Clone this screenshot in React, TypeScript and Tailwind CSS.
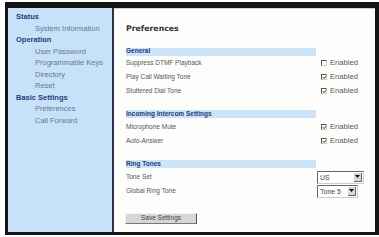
import React from "react";

const Check = ({ checked }: { checked: boolean }) => (
  <div className="relative w-[6px] h-[6px] bg-white border-t border-l border-t-[#555] border-l-[#555] border-r border-b border-r-[#d0d0d0] border-b-[#d0d0d0]">
    {checked && (
      <svg className="absolute left-0 top-0" width="5" height="5" viewBox="0 0 5 5">
        <path d="M0.8 2.2 L2 3.6 L4.3 0.8" fill="none" stroke="#333" strokeWidth="1" />
      </svg>
    )}
  </div>
);

const Enabled = ({ checked }: { checked: boolean }) => (
  <div className="flex items-center gap-[3px] ml-[4px]">
    <Check checked={checked} />
    <span className="text-[7.6px] text-[#555]">Enabled</span>
  </div>
);

const Select = ({ value, width }: { value: string; width: string }) => (
  <div className={`flex items-stretch h-[13px] bg-white border-t border-l border-t-[#666] border-l-[#666] border-r border-b border-r-[#ccc] border-b-[#ccc] ${width}`}>
    <span className="flex-1 text-[7px] leading-[11px] pl-[2px] text-[#444]">{value}</span>
    <div className="w-[8px] m-[1px] bg-[#d8d8d8] border-r border-b border-r-[#666] border-b-[#666] flex items-center justify-center">
      <svg width="5" height="3" viewBox="0 0 5 3">
        <path d="M0 0 L5 0 L2.5 3 Z" fill="#111" />
      </svg>
    </div>
  </div>
);

const Bar = ({ label, mt }: { label: string; mt: string }) => (
  <div className={`w-[190px] h-[8px] bg-[#cde3f8] flex items-center ${mt}`}>
    <span className="text-[6.5px] font-bold text-[#233a7a] leading-none">{label}</span>
  </div>
);

const Row = ({ label, children, h = "h-[14px]" }: { label: string; children?: React.ReactNode; h?: string }) => (
  <div className={`flex items-center ${h}`}>
    <span className="w-[191px] text-[6.5px] text-[#555]">{label}</span>
    <div>{children}</div>
  </div>
);

export default function App() {
  return (
    <div className="w-[379px] h-[237px] bg-white overflow-hidden" style={{ fontFamily: '"Liberation Sans", Arial, sans-serif' }}>
      <div className="ml-[5px] mt-[2px] w-[374px] h-[233px] border-t-[6px] border-l-[3px] border-r-[4px] border-b-[3px] border-[#141414] flex">
        <div className="w-[104px] h-full bg-[#c7e1f9] pt-[3px] pl-[8px] text-[7.5px] leading-[11.5px]">
          <div className="font-bold text-[#253c78]">Status</div>
          <div className="pl-[19px] text-[#65779a]">System Information</div>
          <div className="font-bold text-[#253c78]">Operation</div>
          <div className="pl-[19px] text-[#65779a]">User Password</div>
          <div className="pl-[19px] text-[#65779a]">Programmable Keys</div>
          <div className="pl-[19px] text-[#65779a]">Directory</div>
          <div className="pl-[19px] text-[#65779a]">Reset</div>
          <div className="font-bold text-[#253c78]">Basic Settings</div>
          <div className="pl-[19px] text-[#65779a]">Preferences</div>
          <div className="pl-[19px] text-[#65779a]">Call Forward</div>
        </div>
        <div className="w-[2px] h-full bg-[#2a3350]" />
        <div className="flex-1 h-full bg-[#fdfefc] border-t border-t-[#c8d0e4] pl-[12px]">
          <div className="mt-[15px] h-[10px] flex items-center">
            <span className="text-[7.8px] font-bold text-[#333]" style={{ fontFamily: '"DejaVu Sans", Verdana, sans-serif' }}>Preferences</span>
          </div>
          <Bar label="General" mt="mt-[13.5px]" />
          <div className="mt-[0.5px]">
            <Row label="Suppress DTMF Playback"><Enabled checked={false} /></Row>
            <Row label="Play Call Waiting Tone"><Enabled checked={true} /></Row>
            <Row label="Stuttered Dial Tone"><Enabled checked={true} /></Row>
          </div>
          <Bar label="Incoming Intercom Settings" mt="mt-[12px]" />
          <div className="mt-[2px]">
            <Row label="Microphone Mute"><Enabled checked={true} /></Row>
            <Row label="Auto-Answer"><Enabled checked={true} /></Row>
          </div>
          <Bar label="Ring Tones" mt="mt-[12px]" />
          <div className="mt-[2px]">
            <div className="flex items-center h-[14px]">
              <span className="w-[191px] text-[6.5px] text-[#555]">Tone Set</span>
              <Select value="US" width="w-[47px]" />
            </div>
            <div className="flex items-center h-[14px]">
              <span className="w-[191px] text-[6.5px] text-[#555]">Global Ring Tone</span>
              <Select value="Tone 5" width="w-[41px]" />
            </div>
          </div>
          <div className="mt-[15px] w-[72px] h-[11px] bg-[#d6d6d6] border-t border-l border-t-[#f4f4f4] border-l-[#f4f4f4] border-r border-b border-r-[#555] border-b-[#777] flex items-center justify-center -ml-[1px]">
            <span className="text-[6.5px] text-[#444] leading-none">Save Settings</span>
          </div>
        </div>
      </div>
    </div>
  );
}
